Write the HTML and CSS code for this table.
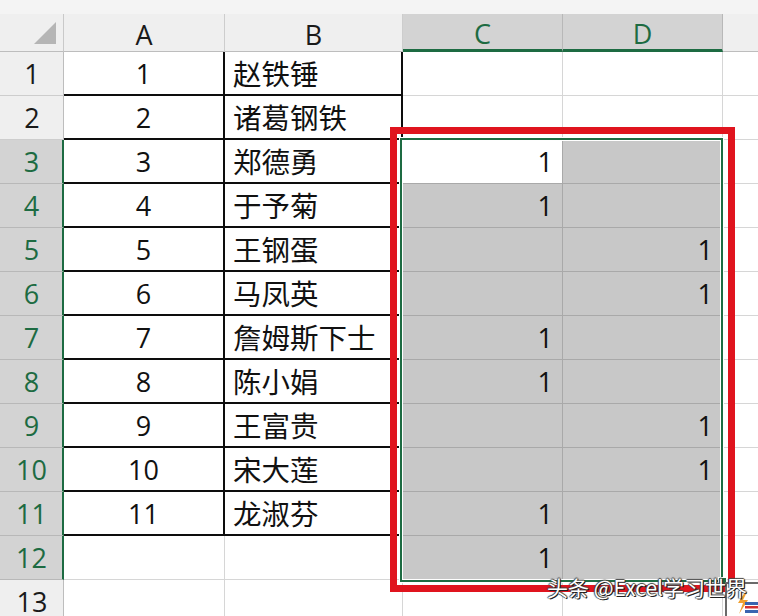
FILE: index.html
```html
<!DOCTYPE html>
<html lang="zh-CN">
<head>
<meta charset="utf-8">
<title>Sheet</title>
<link rel="stylesheet" href="styles.css">
</head>
<body>
<div class="sheet">
  <div class="topstrip"></div>
  <div class="grid">
    <div class="corner"><svg width="22" height="22" viewBox="0 0 22 22"><polygon points="22,0 22,22 0,22" fill="#b5b5b5"/></svg></div>
    <div class="ch">A</div>
    <div class="ch">B</div>
    <div class="ch sel">C</div>
    <div class="ch sel">D</div>
    <div class="ch last"></div>

    <div class="rh">1</div><div class="c b n">1</div><div class="c b name">赵铁锤</div><div class="c"></div><div class="c"></div><div class="c last"></div>
    <div class="rh">2</div><div class="c b n">2</div><div class="c b name">诸葛钢铁</div><div class="c"></div><div class="c"></div><div class="c last"></div>
    <div class="rh sel">3</div><div class="c b n">3</div><div class="c b name">郑德勇</div><div class="c act r">1</div><div class="c g"></div><div class="c last"></div>
    <div class="rh sel">4</div><div class="c b n">4</div><div class="c b name">于予菊</div><div class="c g r">1</div><div class="c g"></div><div class="c last"></div>
    <div class="rh sel">5</div><div class="c b n">5</div><div class="c b name">王钢蛋</div><div class="c g"></div><div class="c g r">1</div><div class="c last"></div>
    <div class="rh sel">6</div><div class="c b n">6</div><div class="c b name">马凤英</div><div class="c g"></div><div class="c g r">1</div><div class="c last"></div>
    <div class="rh sel">7</div><div class="c b n">7</div><div class="c b name">詹姆斯下士</div><div class="c g r">1</div><div class="c g"></div><div class="c last"></div>
    <div class="rh sel">8</div><div class="c b n">8</div><div class="c b name">陈小娟</div><div class="c g r">1</div><div class="c g"></div><div class="c last"></div>
    <div class="rh sel">9</div><div class="c b n">9</div><div class="c b name">王富贵</div><div class="c g"></div><div class="c g r">1</div><div class="c last"></div>
    <div class="rh sel">10</div><div class="c b n">10</div><div class="c b name">宋大莲</div><div class="c g"></div><div class="c g r">1</div><div class="c last"></div>
    <div class="rh sel">11</div><div class="c b n">11</div><div class="c b name">龙淑芬</div><div class="c g r">1</div><div class="c g"></div><div class="c last"></div>
    <div class="rh sel">12</div><div class="c"></div><div class="c"></div><div class="c g r">1</div><div class="c g"></div><div class="c last"></div>
    <div class="rh">13</div><div class="c"></div><div class="c"></div><div class="c"></div><div class="c"></div><div class="c last"></div>
  </div>

  <div class="selection"></div>
  <div class="handle"></div>
  <div class="redbox"></div>
  <div class="logo">
    <svg width="34" height="34" viewBox="0 0 34 34">
      <rect x="1" y="1" width="40" height="40" fill="#ffffff" stroke="#6a6a6a" stroke-width="2"/>
      <polygon points="20,10 13,21 18,21 14,32 23,18 18,18 22,10" fill="#f0a030"/>
      <rect x="20" y="20" width="14" height="3" fill="#3a64b0"/>
      <rect x="20" y="24" width="14" height="2.5" fill="#d43030"/>
      <rect x="20" y="28" width="14" height="3" fill="#3a64b0"/>
    </svg>
  </div>
  <div class="watermark">头条 @Excel学习世界</div>
</div>
</body>
</html>
```

FILE: styles.css
```css
html, body {
  margin: 0;
  padding: 0;
  background: #ffffff;
  overflow: hidden;
}

.sheet {
  position: relative;
  width: 758px;
  height: 616px;
  overflow: hidden;
  font-family: "Open Sans", "Noto Sans CJK SC", sans-serif;
  color: #111;
}

.topstrip {
  height: 14px;
  background: #f4f4f4;
}

.grid {
  display: grid;
  grid-template-columns: 64px 161px 178px 160px 160px 35px;
  grid-template-rows: 38px repeat(13, 44px);
}

.grid > div {
  box-sizing: border-box;
  display: flex;
  align-items: center;
  font-size: 27px;
  line-height: 1;
}

.corner {
  background: #efefef;
  border-right: 1px solid #c9c9c9;
  border-bottom: 1px solid #bdbdbd;
  justify-content: flex-end;
  align-items: flex-end !important;
  padding: 0 7px 7px 0;
}

.ch {
  background: #efefef;
  border-right: 1px solid #cdcdcd;
  border-bottom: 1px solid #bdbdbd;
  justify-content: center;
  padding-top: 3px;
  color: #1a1a1a;
}

.ch.sel {
  background: #d3d3d3;
  color: #1d6b42;
  border-bottom: 3px solid #1d6b42;
  border-right-color: #b8b8b8;
}

.ch.last {
  border-right: none;
}

.rh {
  background: #efefef;
  border-right: 1px solid #bdbdbd;
  border-bottom: 1px solid #cdcdcd;
  justify-content: center;
  color: #1a1a1a;
  padding-left: 1px;
}

.rh.sel {
  background: #d3d3d3;
  color: #1d6b42;
  border-right: 2px solid #1d6b42;
  border-bottom-color: #b8b8b8;
}

.c {
  background: #ffffff;
  border-right: 1px solid #d6d6d6;
  border-bottom: 1px solid #d6d6d6;
}

.c.b {
  border-right: 2px solid #0d0d0d;
  border-bottom: 2px solid #0d0d0d;
}

.c.n {
  justify-content: center;
}

.c.name {
  padding-left: 8px;
  font-size: 28.5px;
  font-family: "Noto Sans CJK SC", sans-serif;
}

.c.r {
  justify-content: flex-end;
  padding-right: 9px;
}

.c.g {
  background: #c8c8c8;
  border-right-color: #a9a9a9;
  border-bottom-color: #a9a9a9;
}

.c.act {
  background: #ffffff;
  border-right-color: #a9a9a9;
  border-bottom-color: #a9a9a9;
}

.c.last {
  border-right: none;
}

.selection {
  position: absolute;
  left: 400px;
  top: 138px;
  width: 323px;
  height: 444px;
  box-sizing: border-box;
  border: 2px solid #1d6b42;
  box-shadow: inset 0 0 0 1px #ffffff, 0 0 0 1px #ffffff;
}

.handle {
  position: absolute;
  left: 718px;
  top: 577px;
  width: 7px;
  height: 7px;
  background: #1d6b42;
  border: 1px solid #ffffff;
}

.redbox {
  position: absolute;
  left: 390px;
  top: 127px;
  width: 345px;
  height: 465px;
  box-sizing: border-box;
  border: 7px solid #e0141e;
}

.watermark {
  position: absolute;
  left: 547px;
  top: 577px;
  font-family: "Noto Sans CJK SC", sans-serif;
  font-size: 21px;
  line-height: 1;
  color: #ffffff;
  white-space: nowrap;
  text-shadow: 1px 1px 0 #222, -1px 0 1px #444, 0 -1px 1px #444, 1px 0 1px #333;
}

.logo {
  position: absolute;
  left: 725px;
  top: 582px;
  width: 34px;
  height: 34px;
}
```
